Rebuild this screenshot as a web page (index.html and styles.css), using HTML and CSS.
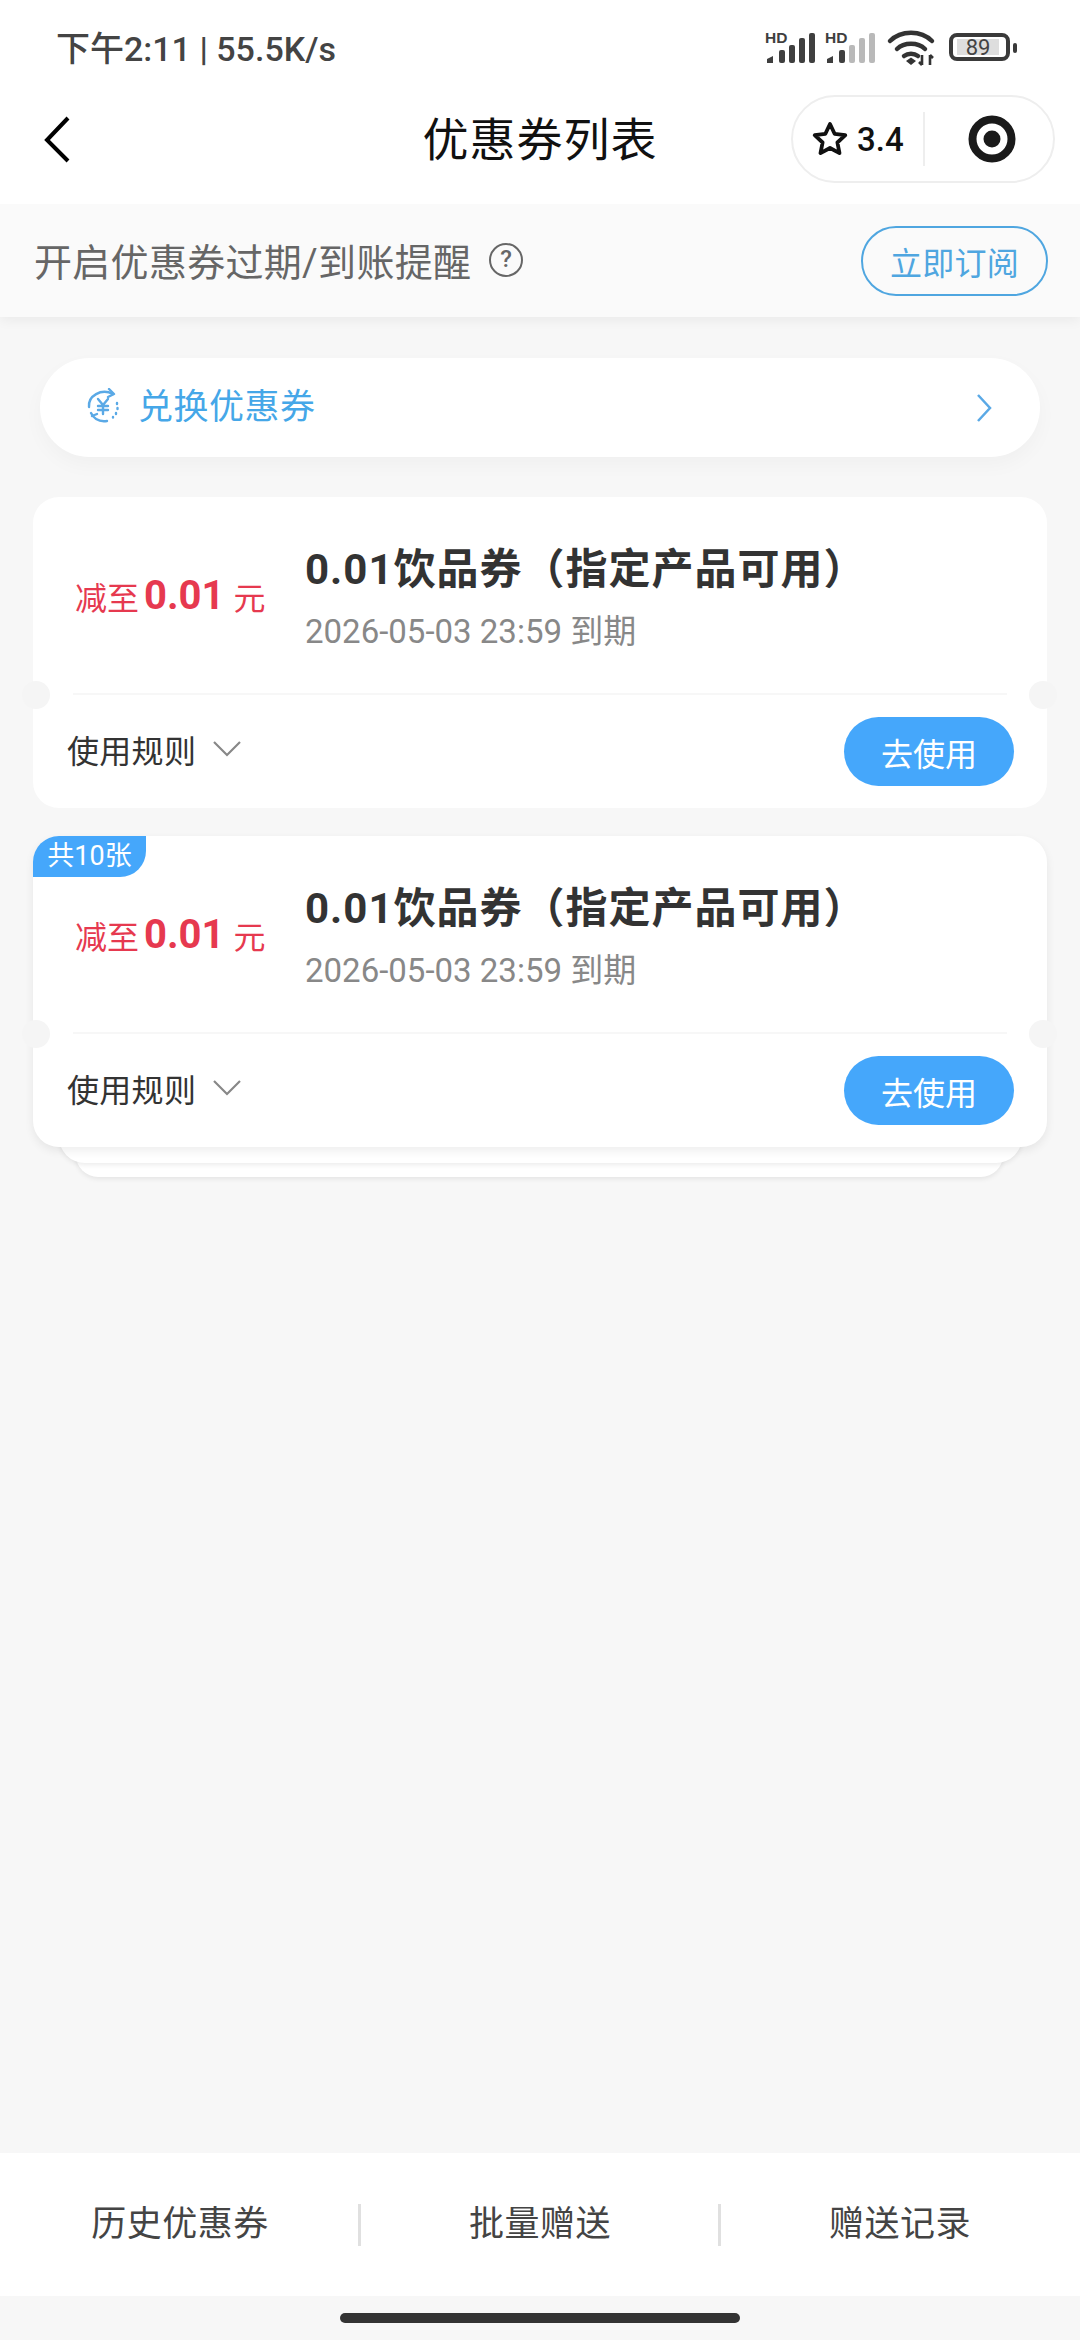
FILE: index.html
```html
<!DOCTYPE html>
<html lang="zh-CN">
<head>
<meta charset="utf-8">
<title>优惠券列表</title>
<link rel="stylesheet" href="styles.css">
</head>
<body>
<div class="page">
  <header class="top">
    <div class="status">
      <span class="time">下午2:11 | 55.5K/s</span>
      <svg class="status-icons" width="262" height="40" viewBox="0 0 262 40">
        <text class="hd" x="0" y="15">HD</text>
        <g fill="#3f3f3f">
          <path d="M2 35v-4l6-3v7z"/>
          <rect x="14" y="22" width="6" height="13" rx="2"/>
          <rect x="24" y="17" width="6" height="18" rx="2"/>
          <rect x="34" y="10" width="6" height="25" rx="2"/>
          <rect x="44" y="5" width="6" height="30" rx="2"/>
        </g>
        <text class="hd" x="60" y="15">HD</text>
        <g fill="#3f3f3f">
          <path d="M62 35v-4l6-3v7z"/>
          <rect x="74" y="22" width="6" height="13" rx="2"/>
        </g>
        <g fill="#b9b9b9">
          <rect x="84" y="17" width="6" height="18" rx="2"/>
          <rect x="94" y="10" width="6" height="25" rx="2"/>
          <rect x="104" y="5" width="6" height="30" rx="2"/>
        </g>
        <g fill="none" stroke="#333" stroke-width="4.500" stroke-linecap="round">
          <path d="M125 13c11-11 31-11 42 0"/>
          <path d="M132 21c7-7 21-7 28 0"/>
          <path d="M139 28c4-3 10-3 14 0"/>
        </g>
        <path d="M141 33l5-3.500 5 3.500-5 4z" fill="#333"/>
        <path d="M157 27v10M154 34l3 3M165 27v10M165 27l3 3" fill="none" stroke="#333" stroke-width="2.600"/>
        <rect x="186" y="7" width="57" height="24" rx="6" fill="none" stroke="#3a3a3a" stroke-width="4"/>
        <rect x="192" y="11" width="42" height="16" fill="#dedede"/>
        <rect x="248" y="15" width="4" height="10" rx="2" fill="#3a3a3a"/>
        <text class="bat" x="213" y="27">89</text>
      </svg>
    </div>
    <nav class="nav">
      <svg class="back" width="28" height="48" viewBox="0 0 28 48">
        <path d="M24 3L3 25l21 21" fill="none" stroke="#000" stroke-width="4"/>
      </svg>
      <h1 class="title">优惠券列表</h1>
      <div class="capsule">
        <svg width="36" height="36" viewBox="0 0 36 36">
          <path d="M18 3l4.600 9.800 10.700 1.400-7.900 7.300 2.100 10.600L18 27l-9.500 5.100 2.100-10.600-7.900-7.300 10.700-1.400z" fill="none" stroke="#111" stroke-width="3.800" stroke-linejoin="round"/>
        </svg>
        <span class="score">3.4</span>
        <span class="cap-line"></span>
        <svg class="target" width="48" height="48" viewBox="0 0 48 48">
          <circle cx="24" cy="24" r="19.500" fill="none" stroke="#1a1a1a" stroke-width="8"/>
          <circle cx="24" cy="24" r="8.500" fill="#1a1a1a"/>
        </svg>
      </div>
    </nav>
  </header>

  <section class="notice">
    <div class="notice-left">
      <span>开启优惠券过期/到账提醒</span>
      <span class="help">?</span>
    </div>
    <button class="subscribe">立即订阅</button>
  </section>

  <main class="list">
    <div class="redeem">
      <svg class="redeem-icon" width="36" height="36" viewBox="0 0 36 36">
        <g fill="none" stroke="#5aa9e6" stroke-width="2.400" stroke-linecap="round" stroke-linejoin="round">
          <path d="M4 19C3 8 16 0 28 6"/>
          <path d="M24 1l5 5-6 3"/>
          <path d="M32 15v1M32.500 20v1M31 25v1M28 29v.5"/>
          <path d="M6 25c3 6 9 9 16 8"/>
          <path d="M12 26l-5 2"/>
          <path d="M13 11l5 6 5-6M18 17v9M13 18h10M13 22h10"/>
        </g>
      </svg>
      <span class="redeem-text">兑换优惠券</span>
      <svg class="redeem-arrow" width="16" height="30" viewBox="0 0 16 30">
        <path d="M2 2l12 13L2 28" fill="none" stroke="#5aa9e6" stroke-width="2.500"/>
      </svg>
    </div>

    <article class="card">
      <div class="card-body">
        <div class="amount"><span>减至</span><b>0.01</b><span>元</span></div>
        <div class="info">
          <div class="name">0.01饮品券（指定产品可用）</div>
          <div class="date">2026-05-03 23:59 到期</div>
        </div>
      </div>
      <div class="card-foot">
        <div class="rules">使用规则
          <svg width="28" height="16" viewBox="0 0 28 16"><path d="M1 1l13 13L27 1" fill="none" stroke="#888" stroke-width="2.200"/></svg>
        </div>
        <button class="use">去使用</button>
      </div>
    </article>

    <div class="stack">
      <article class="card">
        <span class="count">共10张</span>
        <div class="card-body">
          <div class="amount"><span>减至</span><b>0.01</b><span>元</span></div>
          <div class="info">
            <div class="name">0.01饮品券（指定产品可用）</div>
            <div class="date">2026-05-03 23:59 到期</div>
          </div>
        </div>
        <div class="card-foot">
          <div class="rules">使用规则
            <svg width="28" height="16" viewBox="0 0 28 16"><path d="M1 1l13 13L27 1" fill="none" stroke="#888" stroke-width="2.200"/></svg>
          </div>
          <button class="use">去使用</button>
        </div>
      </article>
    </div>
  </main>

  <footer class="bottom">
    <div class="bottom-item">历史优惠券</div>
    <div class="bottom-item">批量赠送</div>
    <div class="bottom-item">赠送记录</div>
  </footer>
  <div class="home-zone"><span class="home-bar"></span></div>
</div>
</body>
</html>
```

FILE: styles.css
```css
* { box-sizing: border-box; }
html, body { margin: 0; padding: 0; }
body {
  font-family: Roboto, "Noto Sans CJK SC", sans-serif;
  background: #f7f7f7;
}
.page {
  width: 1080px;
  height: 2340px;
  display: flex;
  flex-direction: column;
  background: #f7f7f7;
  overflow: hidden;
}
.top { background: #fff; height: 204px; display: flex; flex-direction: column; position: relative; z-index: 1; }
.status {
  height: 88px;
  padding: 21px 24px 0 56px;
  display: flex;
  justify-content: space-between;
  align-items: flex-start;
}
.time {
  font-size: 34px;
  line-height: 56px;
  font-weight: 500;
  color: #444;
}
.status-icons { margin-top: 7px; margin-right: 29px; }
.hd { font-family: "Liberation Sans", sans-serif; font-weight: 700; font-size: 15.500px; fill: #3f3f3f; }
.bat { font-family: Roboto, sans-serif; font-size: 22px; fill: #444; text-anchor: middle; }

.nav {
  flex: 1;
  display: flex;
  align-items: center;
  position: relative;
  padding: 0 25px 14px 44px;
  justify-content: space-between;
}
.title {
  position: absolute;
  left: 0;
  right: 0;
  top: 21px;
  margin: 0;
  text-align: center;
  font-size: 46px;
  line-height: 62px;
  font-weight: 400;
  letter-spacing: 1px;
  color: #111;
}
.capsule {
  width: 264px;
  height: 88px;
  border: 2px solid #eeeeee;
  border-radius: 44px;
  display: flex;
  align-items: center;
  padding-left: 19px;
  background: #fff;
}
.score { font-size: 33px; font-weight: 500; color: #111; margin-left: 9px; }
.cap-line { width: 2px; height: 54px; background: #eee; margin-left: 19px; }
.target { margin-left: 43px; }

.notice {
  height: 113px;
  background: #fafafa;
  box-shadow: 0 3px 12px rgba(0, 0, 0, 0.06);
  display: flex;
  align-items: center;
  justify-content: space-between;
  padding: 0 32px 0 34px;
  position: relative;
  font-size: 38px;
  letter-spacing: 0.300px;
  color: #666;
}
.notice-left { display: flex; align-items: center; gap: 18px; margin-top: -2px; }
.help {
  width: 34px;
  height: 34px;
  border: 2.500px solid #666;
  border-radius: 50%;
  font-size: 24px;
  font-weight: 500;
  line-height: 29px;
  text-align: center;
}
.subscribe {
  width: 187px;
  height: 70px;
  padding: 0;
  border: 2px solid #4fa6e0;
  border-radius: 35px;
  background: transparent;
  color: #4fa6e0;
  font: inherit;
  font-size: 32px;
  letter-spacing: 0.300px;
}

.list { flex: 1; padding: 41px 33px 0; display: flex; flex-direction: column; }
.redeem {
  height: 99px;
  margin: 0 7px 40px;
  background: #fff;
  border-radius: 50px;
  box-shadow: 0 8px 20px rgba(0, 0, 0, 0.03);
  display: flex;
  align-items: center;
  padding: 0 48px 0 45px;
  color: #45a7e8;
}
.redeem-icon { margin-bottom: 3px; }
.redeem-text { font-size: 35px; line-height: 46px; letter-spacing: 0.500px; margin-left: 17px; flex: 1; }

.card {
  position: relative;
  height: 311px;
  background: #fff;
  border-radius: 26px;
  margin-bottom: 28px;
}
.card-body {
  height: 198px;
  display: flex;
  border-bottom: 2px solid #f7f7f7;
  margin: 0 40px;
}
.card-foot {
  height: 113px;
  display: flex;
  justify-content: space-between;
  align-items: center;
  padding: 0 33px 0 34px;
}
/* the two ticket notches on the card edges */
.card-body::before,
.card-body::after {
  content: "";
  position: absolute;
  top: 184px;
  width: 28px;
  height: 28px;
  border-radius: 50%;
  background: #f5f5f5;
}
.card-body::before { left: -11px; }
.card-body::after { right: -10px; }

.amount {
  width: 232px;
  display: flex;
  align-items: center;
  color: #e6394f;
  font-size: 32px;
  padding: 2px 0 0 2px;
  white-space: nowrap;
}
.amount b { font-size: 40px; font-weight: 700; margin: 0 9px 2px 5px; }
.info { display: flex; flex-direction: column; padding-top: 45px; }
.name { font-size: 42px; line-height: 56px; font-weight: 700; color: #333; letter-spacing: 1px; white-space: nowrap; }
.date { font-size: 33px; line-height: 40px; color: #888; margin-top: 14px; white-space: nowrap; }
.rules { font-size: 32px; letter-spacing: 0.300px; color: #333; display: flex; align-items: center; gap: 17px; padding-bottom: 6px; }
.use {
  width: 170px;
  height: 69px;
  padding: 0;
  border: 0;
  border-radius: 35px;
  background: #45a7fb;
  color: #fff;
  font: inherit;
  font-size: 32px;
}

.stack { position: relative; isolation: isolate; }
.stack .card { margin-bottom: 0; box-shadow: 0 4px 10px rgba(0, 0, 0, 0.07); }
.stack::before,
.stack::after {
  content: "";
  position: absolute;
  background: #fff;
  box-shadow: 0 2px 5px rgba(0, 0, 0, 0.08);
}
.stack::before { left: 26px; right: 25px; bottom: -16px; height: 60px; border-radius: 0 0 26px 26px; z-index: -1; }
.stack::after { left: 43px; right: 44px; bottom: -30px; height: 60px; border-radius: 0 0 22px 22px; z-index: -2; }
.count {
  position: absolute;
  left: 0;
  top: 0;
  width: 113px;
  height: 41px;
  background: #45a7fb;
  color: #fff;
  font-size: 27px;
  line-height: 41px;
  text-align: center;
  border-radius: 26px 0 26px 0;
}

.bottom {
  height: 143px;
  background: #fff;
  display: flex;
  align-items: center;
}
.bottom-item {
  flex: 1;
  height: 42px;
  line-height: 42px;
  text-align: center;
  font-size: 35px;
  letter-spacing: 0.500px;
  color: #444;
  position: relative;
}
.bottom-item + .bottom-item::before {
  content: "";
  position: absolute;
  left: -2px;
  top: 0;
  width: 3px;
  height: 42px;
  background: #e0e0e0;
}
.home-zone {
  height: 44px;
  display: flex;
  justify-content: center;
  padding-top: 17px;
}
.home-bar { width: 400px; height: 10px; border-radius: 5px; background: #333; }
```
